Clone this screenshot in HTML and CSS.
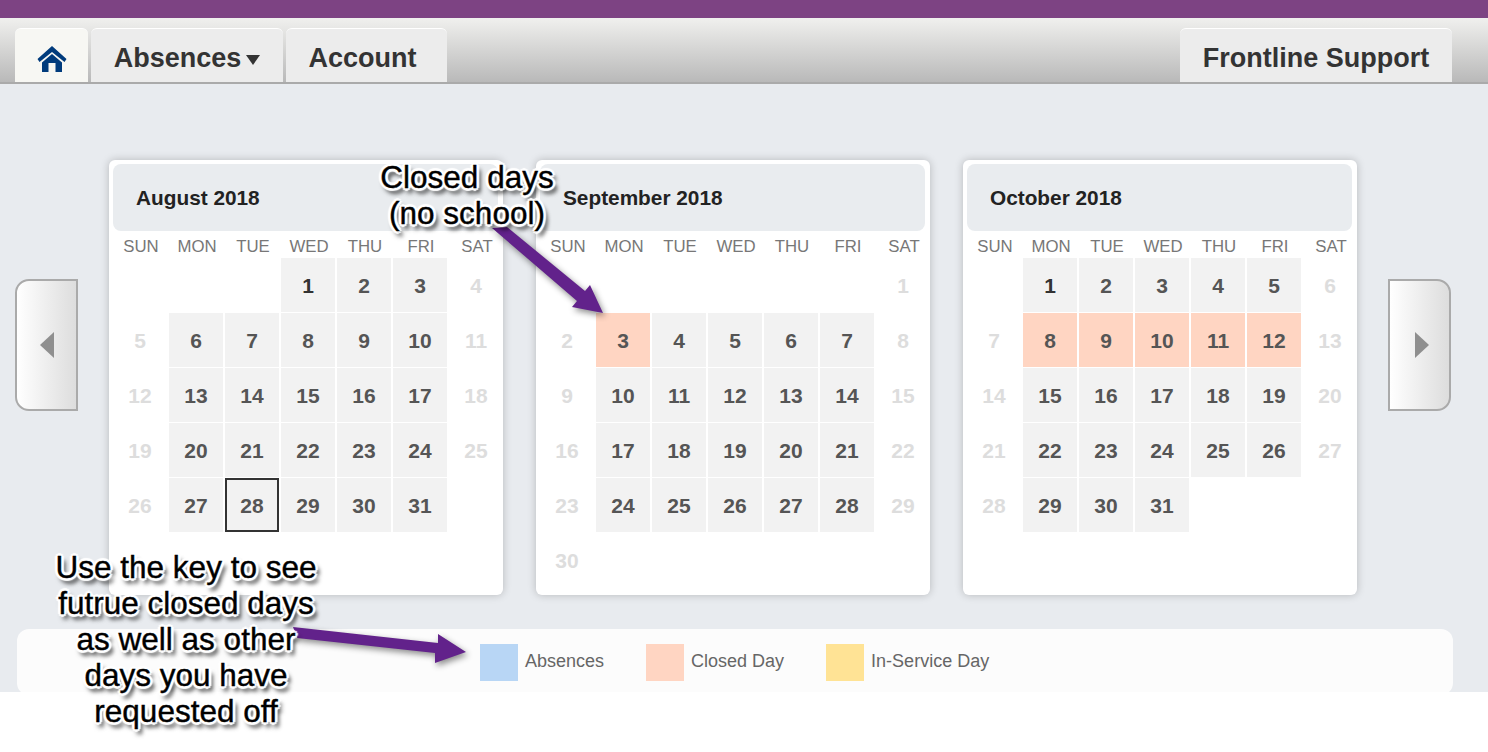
FILE: index.html
```html
<!DOCTYPE html>
<html lang="en">
<head>
    <meta charset="UTF-8">
    <title>Calendar</title>
    <link rel="stylesheet" href="styles.css">
</head>
<body>
    <div class="top-bar"></div>
    <nav class="nav">
        <a class="tab tab-home">
            <svg class="home-icon" width="30" height="26" viewBox="0 0 30 26"><path d="M15 0L29.500 13L27.500 16L15 6L2.500 16L0.500 13Z"/><path d="M15 8L25 16.500V26H18.500V17H11.500V26H5V16.500Z"/></svg>
        </a>
        <a class="tab tab-absences">Absences<span class="caret"></span></a>
        <a class="tab tab-account">Account</a>
        <a class="tab tab-support">Frontline Support</a>
    </nav>
    <main class="main">
        <div class="calendars">
            <button class="page-btn page-prev"><span class="arrow-left"></span></button>

            <section class="month">
                <h2 class="month-title">August 2018</h2>
                <div class="weekdays"><span>SUN</span><span>MON</span><span>TUE</span><span>WED</span><span>THU</span><span>FRI</span><span>SAT</span></div>
                <div class="days">
                    <span></span><span></span><span></span>
                    <span class="day first">1</span><span class="day">2</span><span class="day">3</span><span class="off">4</span>
                    <span class="off">5</span><span class="day">6</span><span class="day">7</span><span class="day">8</span><span class="day">9</span><span class="day">10</span><span class="off">11</span>
                    <span class="off">12</span><span class="day">13</span><span class="day">14</span><span class="day">15</span><span class="day">16</span><span class="day">17</span><span class="off">18</span>
                    <span class="off">19</span><span class="day">20</span><span class="day">21</span><span class="day">22</span><span class="day">23</span><span class="day">24</span><span class="off">25</span>
                    <span class="off">26</span><span class="day">27</span><span class="day today">28</span><span class="day">29</span><span class="day">30</span><span class="day">31</span>
                </div>
            </section>

            <section class="month">
                <h2 class="month-title">September 2018</h2>
                <div class="weekdays"><span>SUN</span><span>MON</span><span>TUE</span><span>WED</span><span>THU</span><span>FRI</span><span>SAT</span></div>
                <div class="days">
                    <span></span><span></span><span></span><span></span><span></span><span></span><span class="off">1</span>
                    <span class="off">2</span><span class="day closed">3</span><span class="day">4</span><span class="day">5</span><span class="day">6</span><span class="day">7</span><span class="off">8</span>
                    <span class="off">9</span><span class="day">10</span><span class="day">11</span><span class="day">12</span><span class="day">13</span><span class="day">14</span><span class="off">15</span>
                    <span class="off">16</span><span class="day">17</span><span class="day">18</span><span class="day">19</span><span class="day">20</span><span class="day">21</span><span class="off">22</span>
                    <span class="off">23</span><span class="day">24</span><span class="day">25</span><span class="day">26</span><span class="day">27</span><span class="day">28</span><span class="off">29</span>
                    <span class="off">30</span>
                </div>
            </section>

            <section class="month">
                <h2 class="month-title">October 2018</h2>
                <div class="weekdays"><span>SUN</span><span>MON</span><span>TUE</span><span>WED</span><span>THU</span><span>FRI</span><span>SAT</span></div>
                <div class="days">
                    <span></span>
                    <span class="day first">1</span><span class="day">2</span><span class="day">3</span><span class="day">4</span><span class="day">5</span><span class="off">6</span>
                    <span class="off">7</span><span class="day closed">8</span><span class="day closed">9</span><span class="day closed">10</span><span class="day closed">11</span><span class="day closed">12</span><span class="off">13</span>
                    <span class="off">14</span><span class="day">15</span><span class="day">16</span><span class="day">17</span><span class="day">18</span><span class="day">19</span><span class="off">20</span>
                    <span class="off">21</span><span class="day">22</span><span class="day">23</span><span class="day">24</span><span class="day">25</span><span class="day">26</span><span class="off">27</span>
                    <span class="off">28</span><span class="day">29</span><span class="day">30</span><span class="day">31</span>
                </div>
            </section>

            <button class="page-btn page-next"><span class="arrow-right"></span></button>
        </div>

        <div class="legend">
            <div class="legend-item"><span class="swatch swatch-absence"></span>Absences</div>
            <div class="legend-item"><span class="swatch swatch-closed"></span>Closed Day</div>
            <div class="legend-item"><span class="swatch swatch-service"></span>In-Service Day</div>
        </div>
    </main>

    <!-- annotations drawn over the screenshot -->
    <svg class="callout-arrows" width="1488" height="752" viewBox="0 0 1488 752">
        <polygon points="492,228 507,227 585,291 590,285 603,313 572,307 577,301"/>
        <polygon points="293,627 438,643 438,634 466,652 435,663 435,653 297,638"/>
    </svg>
    <div class="callout callout-closed">Closed days<br>(no school)</div>
    <div class="callout callout-key">Use the key to see<br>futrue closed days<br>as well as other<br>days you have<br>requested off</div>
</body>
</html>
```

FILE: styles.css
```css
body {
    margin: 0;
    font-family: "Liberation Sans", Arial, sans-serif;
    background-color: #fff;
}
.top-bar {
    height: 18px;
    background-color: #7d4383;
}
.nav {
    display: flex;
    gap: 3px;
    height: 54px;
    padding: 10px 36px 0 15px;
    background: linear-gradient(#f0f0ee, #b9b9b9);
    border-bottom: 2px solid #aaa;
}
.tab {
    display: flex;
    align-items: center;
    justify-content: center;
    height: 54px;
    padding-top: 6px;
    box-sizing: border-box;
    border-top: 1px solid #fff;
    border-radius: 6px 6px 0 0;
    background-color: #ececec;
    color: #333;
    font-size: 27px;
    font-weight: bold;
}
.tab-home {
    width: 73px;
    background-color: #f7f7f3;
}
.home-icon {
    fill: #003b7c;
    margin-top: 1px;
}
.tab-absences {
    width: 192px;
}
.tab-account {
    width: 161px;
    padding-right: 8px;
}
.tab-support {
    width: 272px;
    margin-left: auto;
}
.caret {
    width: 0;
    height: 0;
    margin: 3px 0 0 5px;
    border-top: 10px solid #333;
    border-left: 7px solid transparent;
    border-right: 7px solid transparent;
}
.main {
    height: 532px;
    padding-top: 76px;
    overflow: hidden;
    background-color: #e8ebef;
}
.calendars {
    display: flex;
    align-items: flex-start;
    padding-left: 15px;
}
.page-btn {
    display: flex;
    align-items: center;
    justify-content: center;
    width: 63px;
    height: 132px;
    margin-top: 119px;
    padding: 0;
    border: 2px solid #aaa;
    box-sizing: border-box;
    background: linear-gradient(to right, #fff, #ddd);
}
.page-prev {
    margin-right: 31px;
    padding-left: 1px;
    border-radius: 14px 0 0 14px;
}
.page-next {
    margin-left: 31px;
    padding-left: 4px;
    border-radius: 0 14px 14px 0;
}
.arrow-left, .arrow-right {
    width: 0;
    height: 0;
    border-top: 13px solid transparent;
    border-bottom: 13px solid transparent;
}
.arrow-left {
    border-right: 14px solid #8f8f8f;
}
.arrow-right {
    border-left: 14px solid #8f8f8f;
}
.month {
    width: 394px;
    height: 435px;
    padding: 4px 0 0 4px;
    box-sizing: border-box;
    border-radius: 6px;
    background-color: #fff;
    box-shadow: 0 0 9px rgba(0, 0, 0, 0.22);
}
.month + .month {
    margin-left: 33px;
}
.month-title {
    width: 385px;
    height: 67px;
    margin: 0;
    padding-left: 23px;
    box-sizing: border-box;
    border-radius: 8px;
    background-color: #e9ecef;
    color: #222;
    font-size: 20.800px;
    line-height: 67px;
}
.weekdays {
    display: grid;
    grid-template-columns: repeat(7, 56px);
    height: 20px;
    margin-top: 7px;
    background-color: #fff;
    color: #777;
    font-size: 16.800px;
    line-height: 17px;
    text-align: center;
}
.days {
    display: grid;
    grid-template-columns: repeat(7, 54px);
    grid-auto-rows: 54px;
    gap: 1px 2px;
    font-size: 21px;
    font-weight: bold;
}
.days span {
    display: flex;
    align-items: center;
    justify-content: center;
    padding-top: 2px;
    box-sizing: border-box;
}
.day {
    background-color: #f2f2f2;
    color: #555;
}
.first {
    color: #333;
}
.off {
    color: #ddd;
}
.closed {
    background-color: #ffd5c2;
}
.days .today {
    border: 2px solid #333;
}
.legend {
    display: flex;
    gap: 42px;
    width: 1436px;
    height: 66px;
    margin: 34px 0 0 17px;
    padding: 15px 0 0 463px;
    box-sizing: border-box;
    border-radius: 12px;
    background-color: #fcfcfc;
}
.legend-item {
    display: flex;
    align-items: center;
    height: 35px;
    color: #666;
    font-size: 18px;
}
.swatch {
    width: 38px;
    height: 37px;
    margin: 0 7px -2px 0;
}
.swatch-absence {
    background-color: #b8d6f5;
}
.swatch-closed {
    background-color: #ffd5c2;
}
.swatch-service {
    background-color: #ffe395;
}
.callout-arrows {
    position: absolute;
    top: 0;
    left: 0;
    fill: #62228b;
    filter: drop-shadow(2px 3px 3px rgba(0, 0, 0, 0.45));
}
.callout {
    position: absolute;
    color: #000;
    font-size: 31.500px;
    line-height: 36px;
    text-align: center;
    white-space: nowrap;
    -webkit-text-stroke: 0.4px #000;
    text-shadow: -3px 0 1px #fff, 3px 0 1px #fff, 0 -3px 1px #fff, 0 3px 1px #fff, -2px -2px 1px #fff, 2px -2px 1px #fff, -2px 2px 1px #fff, 2px 2px 1px #fff, 4px 5px 4px rgba(0, 0, 0, 0.7), 2px 5px 5px rgba(0, 0, 0, 0.5);
}
.callout-closed {
    top: 159px;
    left: 367px;
    width: 200px;
}
.callout-key {
    top: 549px;
    left: 36px;
    width: 300px;
}
```
